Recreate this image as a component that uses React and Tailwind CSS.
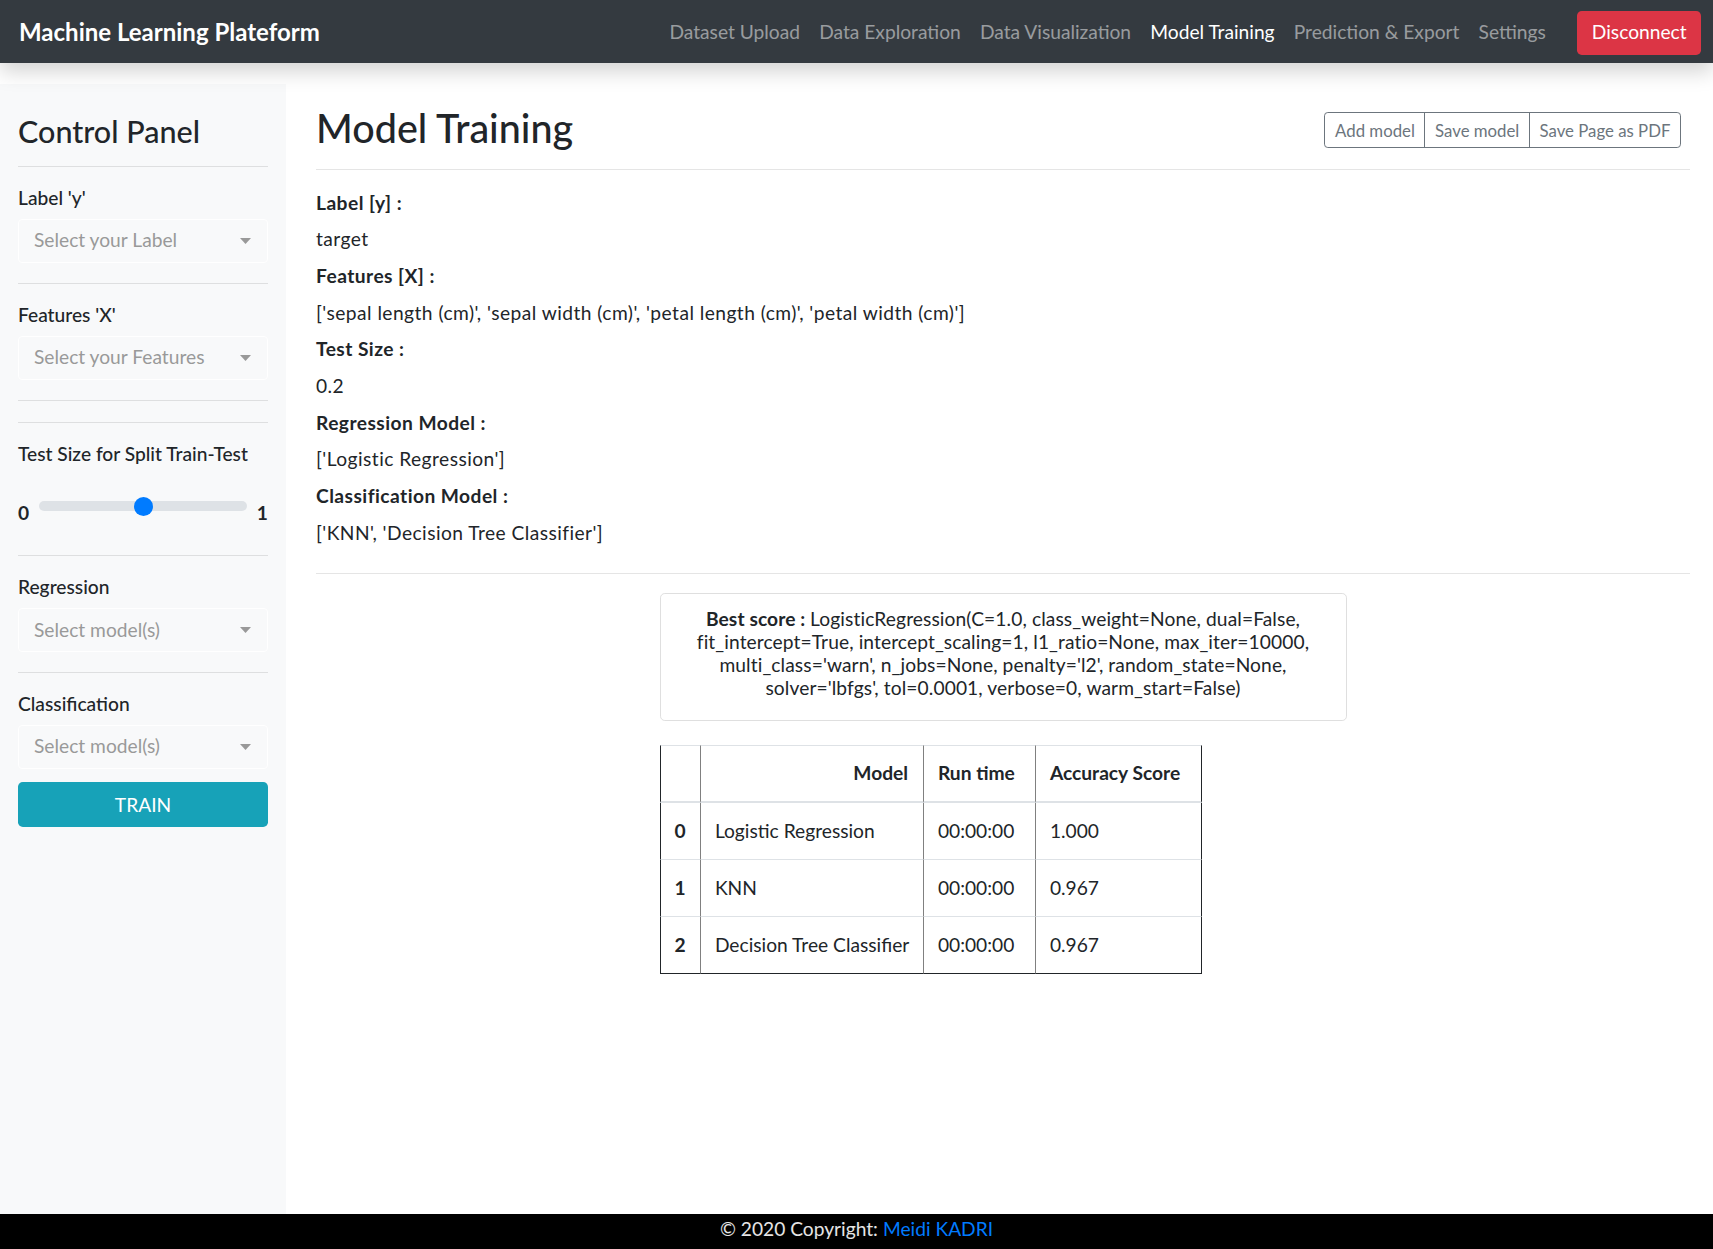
import React from "react";

const FONT = { fontFamily: "Lato, 'Open Sans', sans-serif" };

function Caret() {
  return (
    <svg width="11" height="6" viewBox="0 0 11 6" className="shrink-0">
      <path d="M0 0 L11 0 L5.5 6 Z" fill="#999999" />
    </svg>
  );
}

function SelectBox({ placeholder }) {
  return (
    <div className="mt-[6px] h-[44px] rounded-[4px] border border-white flex items-center justify-between pl-[15px] pr-[16px]">
      <span className="text-[19.2px] text-[#999999] leading-[28.8px]">{placeholder}</span>
      <Caret />
    </div>
  );
}

function Section({ label, placeholder }) {
  return (
    <div className="pt-[17px] pb-[20px]">
      <div className="text-[19.2px] leading-[28.8px] font-medium text-[#212529]">{label}</div>
      <SelectBox placeholder={placeholder} />
    </div>
  );
}

function Hr() {
  return <div className="h-px bg-black/10" />;
}

export default function App() {
  const navLinks = [
    "Dataset Upload",
    "Data Exploration",
    "Data Visualization",
    "Model Training",
    "Prediction & Export",
    "Settings",
  ];
  const info = [
    ["Label [y] :", true],
    ["target", false],
    ["Features [X] :", true],
    ["['sepal length (cm)', 'sepal width (cm)', 'petal length (cm)', 'petal width (cm)']", false],
    ["Test Size :", true],
    ["0.2", false],
    ["Regression Model :", true],
    ["['Logistic Regression']", false],
    ["Classification Model :", true],
    ["['KNN', 'Decision Tree Classifier']", false],
  ];
  const rows = [
    ["0", "Logistic Regression", "00:00:00", "1.000"],
    ["1", "KNN", "00:00:00", "0.967"],
    ["2", "Decision Tree Classifier", "00:00:00", "0.967"],
  ];

  return (
    <div style={FONT} className="h-[1249px] w-full flex flex-col bg-white text-[#212529] overflow-hidden">
      {/* Navbar */}
      <nav className="relative z-10 h-[63px] shrink-0 bg-[#343a40] flex items-center pl-[19px] pr-[12px] shadow-[0_9px_19px_rgba(0,0,0,0.17)]">
        <span className="text-[24px] leading-[36px] font-bold text-white">Machine Learning Plateform</span>
        <div className="ml-auto flex items-center pt-[2px]">
          {navLinks.map((l) => (
            <span
              key={l}
              className={
                "px-[9.6px] text-[19.2px] leading-[28.8px] " +
                (l === "Model Training" ? "text-white" : "text-white/50")
              }
            >
              {l}
            </span>
          ))}
          <button className="ml-[22px] h-[44px] px-[14.4px] rounded-[4.8px] bg-[#dc3545] text-white text-[19.2px] leading-[28.8px]">
            Disconnect
          </button>
        </div>
      </nav>

      {/* Body */}
      <div className="flex flex-1 min-h-0">
        {/* Sidebar */}
        <aside className="w-[286px] shrink-0 mt-[21px] bg-[#f8f9fa] px-[18px] pt-[27px]">
          <h3 className="text-[30.5px] leading-[40px] font-medium text-[#212529]">Control Panel</h3>
          <div className="mt-[15px]" />
          <Hr />
          <Section label="Label 'y'" placeholder="Select your Label" />
          <Hr />
          <Section label="Features 'X'" placeholder="Select your Features" />
          <Hr />
          <div className="h-[21px]" />
          <Hr />
          <div className="pt-[17px]">
            <div className="text-[19.2px] leading-[28.8px] font-medium">Test Size for Split Train-Test</div>
            <div className="mt-[31px] flex items-start">
              <span className="w-[21px] text-[19.2px] leading-[28.8px] font-bold">0</span>
              <div className="relative flex-1 h-[10px] mt-[2px] rounded-full bg-[#dee2e6]">
                <div className="absolute left-[95px] top-[-4.5px] w-[19px] h-[19px] rounded-full bg-[#007bff]" />
              </div>
              <span className="w-[21px] text-right text-[19.2px] leading-[28.8px] font-bold">1</span>
            </div>
          </div>
          <div className="h-[27px]" />
          <Hr />
          <Section label="Regression" placeholder="Select model(s)" />
          <Hr />
          <div className="pt-[17px]">
            <div className="text-[19.2px] leading-[28.8px] font-medium">Classification</div>
            <SelectBox placeholder="Select model(s)" />
          </div>
          <button className="mt-[13px] w-full h-[45px] rounded-[4.8px] bg-[#17a2b8] text-white text-[19.2px] leading-[28.8px] pt-[3px]">
            TRAIN
          </button>
        </aside>

        {/* Main */}
        <main className="flex-1 pl-[30px] pr-[23px] pt-[42px]">
          <div className="flex items-center justify-between">
            <h2 className="text-[39.5px] leading-[46px] font-medium text-[#212529]">Model Training</h2>
            <div className="flex mr-[9px] mt-[4px]">
              <button className="h-[36px] px-[9.6px] border border-[#6c757d] rounded-l-[3.8px] text-[#6c757d] text-[16.8px] leading-[25px]">
                Add model
              </button>
              <button className="h-[36px] px-[9.6px] border border-[#6c757d] -ml-px text-[#6c757d] text-[16.8px] leading-[25px]">
                Save model
              </button>
              <button className="h-[36px] px-[9.6px] border border-[#6c757d] -ml-px rounded-r-[3.8px] text-[#6c757d] text-[16.8px] leading-[25px]">
                Save Page as PDF
              </button>
            </div>
          </div>
          <div className="mt-[18px]" />
          <Hr />
          <div className="pt-[14.7px] pb-[21.7px]">
            {info.map(([t, b], i) => (
              <div key={i} className={"text-[19.2px] leading-[36.67px] tracking-[0.45px] " + (b ? "font-bold" : "")}>
                {t}
              </div>
            ))}
          </div>
          <Hr />
          <div className="w-1/2 mx-auto mt-[19px]">
            <div className="border border-[#dfdfdf] rounded-[4.8px] pt-[13px] pb-[21px] text-center text-[19.2px] leading-[23px] whitespace-nowrap tracking-[0.1px]">
              <b>Best score : </b>LogisticRegression(C=1.0, class_weight=None, dual=False,
              <br />
              fit_intercept=True, intercept_scaling=1, l1_ratio=None, max_iter=10000,
              <br />
              multi_class='warn', n_jobs=None, penalty='l2', random_state=None,
              <br />
              solver='lbfgs', tol=0.0001, verbose=0, warm_start=False)
            </div>
            <table className="mt-[24px] table-fixed w-[542px] border-separate border-spacing-0 text-[19.2px] leading-[28.8px]">
              <thead>
                <tr className="h-[58px]">
                  <th className="w-[41px] border-l border-l-[#212529] border-t border-t-[#dee2e6] border-r border-r-[#808080] border-b-2 border-b-[#dee2e6]"></th>
                  <th className="w-[223px] px-[14.4px] text-right font-bold border-t border-t-[#dee2e6] border-r border-r-[#808080] border-b-2 border-b-[#dee2e6]">
                    Model
                  </th>
                  <th className="w-[112px] px-[14.4px] text-left font-bold whitespace-nowrap border-t border-t-[#dee2e6] border-r border-r-[#808080] border-b-2 border-b-[#dee2e6]">
                    Run time
                  </th>
                  <th className="w-[166px] px-[14.4px] text-left font-bold whitespace-nowrap border-t border-t-[#dee2e6] border-r border-r-[#212529] border-b-2 border-b-[#dee2e6]">
                    Accuracy Score
                  </th>
                </tr>
              </thead>
              <tbody>
                {rows.map((r, i) => {
                  const last = i === rows.length - 1;
                  const bb = last ? "border-b border-b-[#212529]" : "border-b border-b-[#dee2e6]";
                  return (
                    <tr key={i} className="h-[57px]">
                      <th className={"text-center font-bold border-l border-l-[#212529] border-r border-r-[#808080] " + bb}>
                        {r[0]}
                      </th>
                      <td className={"px-[14.4px] font-normal whitespace-nowrap border-r border-r-[#808080] " + bb}>{r[1]}</td>
                      <td className={"px-[14.4px] whitespace-nowrap border-r border-r-[#808080] " + bb}>{r[2]}</td>
                      <td className={"px-[14.4px] whitespace-nowrap border-r border-r-[#212529] " + bb}>{r[3]}</td>
                    </tr>
                  );
                })}
              </tbody>
            </table>
          </div>
        </main>
      </div>

      {/* Footer */}
      <footer className="h-[35px] shrink-0 bg-black flex justify-center items-start pt-[1px] text-[19.2px] leading-[28.8px]">
        <span className="text-white/90">© 2020 Copyright: </span>
        <span className="text-[#007bff] ml-[5px]">Meidi KADRI</span>
      </footer>
    </div>
  );
}
